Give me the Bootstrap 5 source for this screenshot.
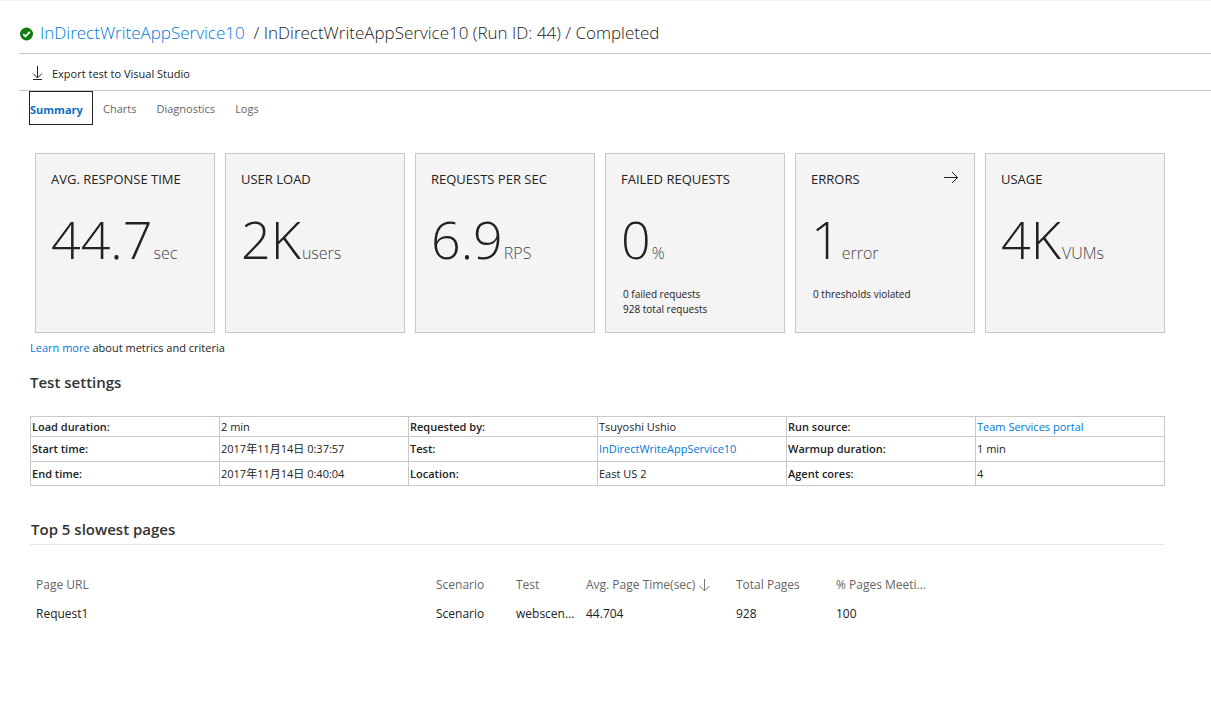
<!DOCTYPE html>
<html lang="en">
<head>
<meta charset="utf-8">
<meta name="viewport" content="width=device-width, initial-scale=1">
<title>Load test run - Summary</title>
<link href="https://cdn.jsdelivr.net/npm/bootstrap@5.3.0/dist/css/bootstrap.min.css" rel="stylesheet">
<style>
  body { font-family: "Open Sans", "Noto Sans CJK JP", sans-serif; font-size: 11px; line-height: 16px; color: #222; background: #fff; border-top: 1px solid #eaf3fc; }
  a { color: #0078d7; text-decoration: none; }
  a:hover { text-decoration: underline; }
  .run-shell { padding-left: 19px; }
  .run-title { font-size: 17px; line-height: 24px; font-weight: 300; padding: 20px 0 8px; border-bottom: 1px solid #c8c8c8; gap: 6px; }
  .run-toolbar { padding: 12px 0 8px 12px; border-bottom: 1px solid #c8c8c8; }
  .tool-btn { font-size: 11px; line-height: 16px; color: #222; gap: 8px; }
  .run-tabs { padding-left: 10px; }
  .run-tabs .nav-link { font-size: 11px; color: #666; padding: 10px 10px 8px; line-height: 16px; }
  .run-tabs .nav-link.active { color: #106ebe; font-weight: 700; width: 64px; padding: 10px 0 6px; border: 1px solid #222; }
  .run-body { padding: 28px 46px 24px 11px; }
  .tile-grid { display: grid; grid-template-columns: repeat(auto-fit, minmax(170px, 1fr)); gap: 10px; padding-left: 5px; }
  .tile { min-height: 180px; background: #f4f4f4; border: 1px solid #c8c8c8; padding: 17px 15px 12px; }
  .tile-name { font-size: 13px; line-height: 16px; font-weight: 400; }
  .tile-value { padding-top: 20px; font-weight: 300; gap: 1px; }
  .tile-number { font-size: 52px; line-height: 64px; }
  .tile-unit { font-size: 16px; line-height: 16px; color: #444; }
  .tile-notes { font-size: 10px; line-height: 15px; padding: 16px 2px 0; }
  .learn-line { padding-top: 7px; }
  .section-title { font-size: 15px; line-height: 20px; font-weight: 600; color: #333; }
  .settings-table { table-layout: fixed; border-collapse: collapse; }
  .settings-table th, .settings-table td { border: 1px solid #c8c8c8; padding: 1px; height: 24px; line-height: 16px; vertical-align: middle; }
  .settings-table tr:first-child > * { height: 20px; }
  .settings-table tr:nth-child(2) > * { height: 25px; }
  .settings-table th { font-weight: 600; }
  .pages-section { padding-top: 33px; }
  .pages-head { border-bottom: 1px solid #e6e6e6; padding: 0 0 5px 1px; margin-bottom: 26px; }
  .pages-table { table-layout: fixed; width: 900px; max-width: 100%; margin-left: 1px; }
  .pages-table th, .pages-table td { font-size: 12px; padding: 6px 5px 7px; line-height: 16px; overflow: hidden; text-overflow: ellipsis; white-space: nowrap; }
  .pages-table th { font-weight: 400; color: #666; }
  .col-url { width: 400px; } .col-scenario { width: 80px; } .col-test { width: 70px; }
  .col-time { width: 150px; } .col-total, .col-goal { width: 100px; }
</style>
</head>
<body>
<div class="run-shell">
  <header>
    <h1 class="run-title d-flex align-items-center mb-0">
      <svg class="flex-shrink-0" width="15" height="15" viewBox="0 0 15 15" aria-hidden="true"><circle cx="7.500" cy="8" r="6.500" fill="#107c10"/><path d="M4.300 8.200 6.500 10.400l4.400-4.500" fill="none" stroke="#fff" stroke-width="1.800"/></svg>
      <span><a href="#">InDirectWriteAppService10</a>&nbsp; / InDirectWriteAppService10 (Run ID: 44) / Completed</span>
    </h1>
    <div class="run-toolbar">
      <button type="button" class="tool-btn btn d-flex align-items-center border-0 p-0">
        <svg width="13" height="16" viewBox="0 0 13 16" fill="none" stroke="#222" aria-hidden="true"><path d="M6.500 0v11.500M2 7.500l4.500 4.500L11 7.500M2 13.500h9"/></svg>
        Export test to Visual Studio
      </button>
    </div>
    <ul class="nav run-tabs">
      <li class="nav-item"><a class="nav-link active" aria-current="page" href="#">Summary</a></li>
      <li class="nav-item"><a class="nav-link" href="#">Charts</a></li>
      <li class="nav-item"><a class="nav-link" href="#">Diagnostics</a></li>
      <li class="nav-item"><a class="nav-link" href="#">Logs</a></li>
    </ul>
  </header>

  <main class="run-body">
    <section class="tile-grid">
      <article class="tile">
        <h2 class="tile-name mb-0">AVG. RESPONSE TIME</h2>
        <div class="tile-value d-flex align-items-baseline"><span class="tile-number">44.7</span><span class="tile-unit">sec</span></div>
      </article>
      <article class="tile">
        <h2 class="tile-name mb-0">USER LOAD</h2>
        <div class="tile-value d-flex align-items-baseline"><span class="tile-number">2K</span><span class="tile-unit">users</span></div>
      </article>
      <article class="tile">
        <h2 class="tile-name mb-0">REQUESTS PER SEC</h2>
        <div class="tile-value d-flex align-items-baseline"><span class="tile-number">6.9</span><span class="tile-unit">RPS</span></div>
      </article>
      <article class="tile">
        <h2 class="tile-name mb-0">FAILED REQUESTS</h2>
        <div class="tile-value d-flex align-items-baseline"><span class="tile-number">0</span><span class="tile-unit">%</span></div>
        <div class="tile-notes">0 failed requests<br>928 total requests</div>
      </article>
      <article class="tile">
        <div class="d-flex justify-content-between">
          <h2 class="tile-name mb-0">ERRORS</h2>
          <a class="d-flex" href="#" aria-label="Show errors"><svg width="16" height="14" viewBox="0 0 16 14" fill="none" stroke="#222" aria-hidden="true"><path d="M1 6.500h14M9 1l5.500 5.500L9 12"/></svg></a>
        </div>
        <div class="tile-value d-flex align-items-baseline"><span class="tile-number">1</span><span class="tile-unit">error</span></div>
        <div class="tile-notes">0 thresholds violated</div>
      </article>
      <article class="tile">
        <h2 class="tile-name mb-0">USAGE</h2>
        <div class="tile-value d-flex align-items-baseline"><span class="tile-number">4K</span><span class="tile-unit">VUMs</span></div>
      </article>
    </section>
    <p class="learn-line mb-0"><a href="#">Learn more</a> about metrics and criteria</p>

    <section class="pt-3">
      <h2 class="section-title mb-4">Test settings</h2>
      <table class="settings-table w-100">
        <tbody>
          <tr><th scope="row">Load duration:</th><td>2 min</td><th scope="row">Requested by:</th><td>Tsuyoshi Ushio</td><th scope="row">Run source:</th><td><a href="#">Team Services portal</a></td></tr>
          <tr><th scope="row">Start time:</th><td>2017年11月14日 0:37:57</td><th scope="row">Test:</th><td><a href="#">InDirectWriteAppService10</a></td><th scope="row">Warmup duration:</th><td>1 min</td></tr>
          <tr><th scope="row">End time:</th><td>2017年11月14日 0:40:04</td><th scope="row">Location:</th><td>East US 2</td><th scope="row">Agent cores:</th><td>4</td></tr>
        </tbody>
      </table>
    </section>

    <section class="pages-section">
      <h2 class="section-title pages-head">Top 5 slowest pages</h2>
      <table class="pages-table">
        <colgroup><col class="col-url"><col class="col-scenario"><col class="col-test"><col class="col-time"><col class="col-total"><col class="col-goal"></colgroup>
        <thead>
          <tr><th scope="col">Page URL</th><th scope="col">Scenario</th><th scope="col">Test</th><th scope="col" aria-sort="descending">Avg. Page Time(sec) <svg width="11" height="13" viewBox="0 0 11 13" fill="none" stroke="#777" aria-hidden="true"><path d="M5.500 0v12M.5 7l5 5 5-5"/></svg></th><th scope="col">Total Pages</th><th scope="col">% Pages Meeting Goal</th></tr>
        </thead>
        <tbody>
          <tr><td>Request1</td><td>Scenario</td><td>webscenario</td><td>44.704</td><td>928</td><td>100</td></tr>
        </tbody>
      </table>
    </section>
  </main>
</div>
<script src="https://cdn.jsdelivr.net/npm/bootstrap@5.3.0/dist/js/bootstrap.bundle.min.js"></script>
</body>
</html>
